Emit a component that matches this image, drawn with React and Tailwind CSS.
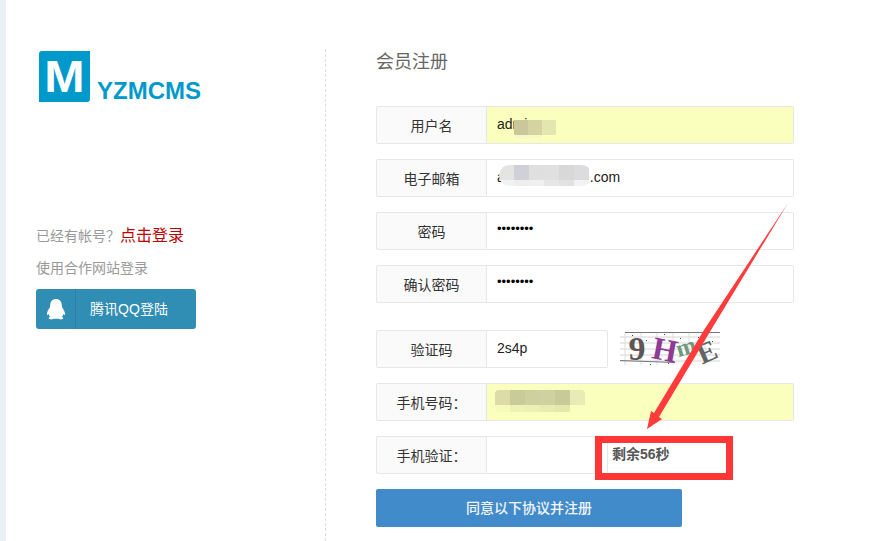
import React from "react";

const FONT = "font-['Liberation_Sans','Noto_Sans_CJK_SC',sans-serif]";

const USER_BLUR = [
  ["#c8c89a", "#f4f8c8"],
  ["#d4d4a0", "#f6fac4"],
  ["#e4e6b0", "#faffbd"],
];
const MAIL_BLUR = [
  ["#e4e4e2", "#f2f2f0"],
  ["#d0d0d8", "#eeeeee"],
  ["#dfdfe0", "#efefef"],
  ["#e0e0e0", "#e6e6e6"],
  ["#d8d8d8", "#e2e2e2"],
  ["#dcdcde", "#f2f2f2"],
];
const PHONE_BLUR = [
  ["#dcdca8", "#f6fabb"],
  ["#c8cc96", "#eef2b4"],
  ["#ced09e", "#ecf0b2"],
  ["#cfd2a0", "#e8ecb0"],
  ["#c8cb98", "#e4e8ac"],
  ["#e8ebb4", "#faffbd"],
];

const CAPTCHA_LETTERS = [
  { ch: "9", x: 17, y: 18, size: 34, deg: 0, fill: "#5f5557" },
  { ch: "H", x: 45, y: 19, size: 32, deg: 11, fill: "#8e3a96" },
  { ch: "m", x: 66, y: 16, size: 24, deg: -16, fill: "#6c9a7c" },
  { ch: "E", x: 87, y: 21, size: 29, deg: -24, fill: "#626660" },
];

function Mosaic({ cells, className }) {
  return (
    <span className={`absolute flex overflow-hidden ${className}`}>
      {cells.map(([top, bottom], i) => (
        <span key={i} className="flex h-full w-[15px] flex-col">
          <span className="h-[15px] shrink-0" style={{ background: top }} />
          <span className="flex-1" style={{ background: bottom }} />
        </span>
      ))}
    </span>
  );
}

function Row({ label, wide = true, yellow = false, value, dots, className = "", children }) {
  return (
    <div className={`flex h-[38px] ${wide ? "w-[418px]" : "w-[232px]"} ${className}`}>
      <div className="flex w-[111px] shrink-0 items-center justify-center rounded-l-[2px] border border-[#e7e7eb] bg-[#fafafa] pt-[1px] text-sm text-[#333]">
        {label}
      </div>
      <div className={`relative flex flex-1 items-center rounded-r-[2px] border border-l-0 border-[#e7e7eb] pl-[10px] text-sm text-[#222] ${yellow ? "bg-[#faffbd]" : "bg-white"}`}>
        {dots ? (
          <span className="relative top-[-2px] text-[13px] text-black">••••••••</span>
        ) : (
          <span className="relative top-[-1px]">{value}</span>
        )}
        {children}
      </div>
    </div>
  );
}

function Captcha() {
  return (
    <svg width="100" height="36" viewBox="0 0 100 36" className="ml-[12px] shrink-0 overflow-visible">
      {[6, 12, 18, 24, 30].map((y) => (
        <line key={y} x1="0" x2="100" y1={y} y2={y} stroke="#d4d4d4" />
      ))}
      {[5, 21, 37, 53, 69, 85].map((x) => (
        <line key={x} x1={x} x2={x} y1="1" y2="34" stroke="#dcdcdc" />
      ))}
      <line x1="5" x2="100" y1="1.500" y2="1.500" stroke="#777" />
      <line x1="0" x2="55" y1="29.500" y2="31.500" stroke="#777" />
      {[[12, 4], [26, 9], [44, 3], [60, 7], [30, 33], [48, 32], [16, 27], [78, 6], [92, 10]].map(([x, y]) => (
        <rect key={`${x}-${y}`} x={x} y={y} width="1" height="1" fill="#444" />
      ))}
      {CAPTCHA_LETTERS.map((l) => (
        <text
          key={l.ch}
          x="0"
          y={l.size * 0.33}
          textAnchor="middle"
          fontFamily="Liberation Serif"
          fontWeight="700"
          fontSize={l.size}
          fill={l.fill}
          transform={`translate(${l.x} ${l.y}) rotate(${l.deg})`}
        >
          {l.ch}
        </text>
      ))}
    </svg>
  );
}

export default function App() {
  return (
    <div className={`relative flex h-[541px] w-[876px] overflow-hidden bg-white ${FONT}`}>
      <div className="w-[6px] shrink-0 bg-[#ebf0f5]" />

      {/* left column */}
      <div className="flex w-[319px] shrink-0 flex-col pl-[30px] pt-[51px]">
        <div className="flex items-end pl-[3px]">
          <div className="flex h-[51px] w-[51px] items-center justify-center rounded-tl-[3px] rounded-br-[3px] bg-[#0099cc] text-[44px] leading-none font-bold text-white">
            <span className="scale-x-110">M</span>
          </div>
          <span className="ml-[7px] text-[24px] leading-[22px] font-bold text-[#0099cc]">YZMCMS</span>
        </div>

        <p className="mt-[122px] text-sm leading-5 text-[#999]">
          已经有帐号？<span className="text-base text-[#c00000]">点击登录</span>
        </p>
        <p className="mt-[10px] text-sm leading-5 text-[#999]">使用合作网站登录</p>
        <div className="mt-[11px] flex h-10 w-40 items-center rounded-[3px] bg-[#308db4] text-sm text-white">
          <div className="flex h-full w-10 shrink-0 items-center justify-center border-r border-[#2a7fa3]">
            <svg width="20" height="22" viewBox="0 0 20 22" fill="#fff">
              <path d="M10 1c-3.600 0-5.800 2.700-5.800 6.200 0 .9-.1 1.700-.6 2.500C2.400 11.600.7 14.200 1 16.500c.2 1 .9.600 1.600-.6.300 1.200.9 2.200 1.700 2.900-1.100.4-1.700 1-1.500 1.600.300.9 2.600 1 4.400.6 1-.2 1.900-.3 2.800-.3s1.800.1 2.800.3c1.800.4 4.100.3 4.400-.6.200-.6-.4-1.200-1.500-1.600.8-.7 1.400-1.700 1.700-2.900.7 1.200 1.400 1.600 1.600.6.300-2.300-1.400-4.900-2.600-6.800-.5-.8-.6-1.600-.6-2.500C15.800 3.700 13.600 1 10 1z" />
            </svg>
          </div>
          <span className="flex-1 pr-[14px] text-center">腾讯QQ登陆</span>
        </div>
      </div>

      {/* right column */}
      <div className="mt-[49px] flex-1 border-l border-dashed border-[#dddddd] pl-[50px]">
        <h1 className="pt-[1px] text-[18px] leading-6 font-normal text-[#666]">会员注册</h1>

        <div className="mt-[32px] flex flex-col">
          <Row label="用户名" yellow value="admin">
            <Mosaic cells={USER_BLUR} className="left-[27px] top-[13px] h-[19px] w-[42px] rounded-b-md" />
          </Row>
          <Row
            label="电子邮箱"
            value={
              <>
                a<span className="inline-block w-[85px]" />.com
              </>
            }
            className="mt-[15px]"
          >
            <Mosaic cells={MAIL_BLUR} className="left-[12px] top-[5px] h-[21px] w-[93px] rounded-full" />
          </Row>
          <Row label="密码" dots className="mt-[15px]" />
          <Row label="确认密码" dots className="mt-[15px]" />
          <div className="mt-[27px] flex items-center">
            <Row label="验证码" wide={false} value="2s4p" />
            <Captcha />
          </div>
          <Row label="手机号码：" yellow className="mt-[15px]">
            <Mosaic cells={PHONE_BLUR} className="left-[8px] top-[6px] h-[22px] w-[90px] rounded-sm" />
          </Row>
          <div className="mt-[15px] flex">
            <Row label="手机验证：" wide={false} />
            <div className="flex h-[38px] w-[120px] items-center border border-l-0 border-[#e7e7eb] pb-[3px] pl-[4px] text-sm font-bold text-[#555]">
              剩余56秒
            </div>
          </div>
          <button className="mt-[15px] h-[38px] w-[306px] rounded-[2px] bg-[#428bca] text-sm font-medium text-[#f2f6fa]">
            同意以下协议并注册
          </button>
        </div>
      </div>

      {/* screenshot annotation */}
      <div className="absolute left-[595px] top-[436px] h-[44px] w-[138px] border-[7px] border-[#ff3636]" />
      <svg className="absolute left-0 top-0" width="876" height="541" viewBox="0 0 876 541">
        <polygon points="788,203 711,330 659,417 662,419 647,429 651,411 654,413 704,330" fill="#ff3b3b" />
      </svg>
    </div>
  );
}
